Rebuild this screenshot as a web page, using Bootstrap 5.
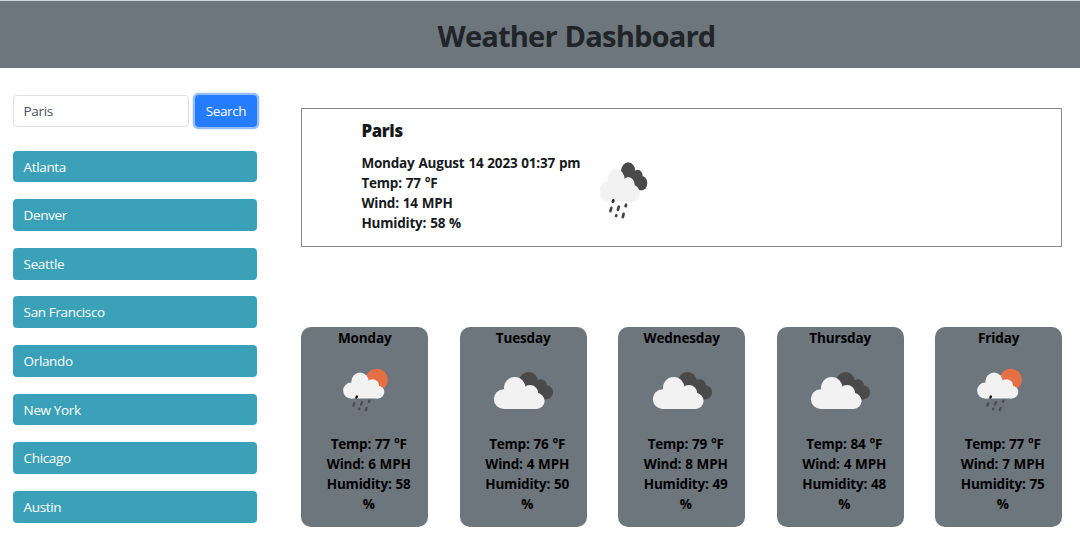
<!DOCTYPE html>
<html lang="en">
<head>
<meta charset="utf-8">
<meta name="viewport" content="width=device-width, initial-scale=1">
<title>Weather Dashboard</title>
<link href="https://cdn.jsdelivr.net/npm/bootstrap@5.3.0/dist/css/bootstrap.min.css" rel="stylesheet">
<style>
  html { font-size: 13.5px; }
  body { font-family: "Open Sans", "Noto Sans", sans-serif; font-size: 13.5px; line-height: 20.3px; overflow: hidden; }
  .page-header { height: 68px; background: #6d757d; border-top: 1px solid #cdd9e0; padding: 4px 0 0 73px; }
  .page-header h1 { font-size: 29.2px; font-weight: 700; color: #212529; letter-spacing: -.88px; word-spacing: 1px; }
  .sidebar { width: 244px; margin: 27px 0 0 13px; }
  .sidebar .form-control, .sidebar .btn { height: 31.8px; padding: 0 9.6px; border-radius: 3.5px; font-size: 13.5px; line-height: 31px; letter-spacing: -.36px; }
  .sidebar .form-control { width: 175.5px; border-color: #dee2e6; color: #495057; }
  .sidebar .btn-search { width: 62px; color: #fff; background: #267cff; border-color: #267cff; box-shadow: 0 0 0 2.3px #94befe; }
  .sidebar .btn-city { color: #fff; background: #3aa1b8; border-color: #3aa1b8; }
  .city-list { gap: 16.8px; margin-top: 23.9px; }
  .forecast-area { margin: 40px 18px 0 44.4px; }
  .current { height: 139px; border: 1px solid #8b8b8b; padding: 12px 0 0 59px; font-weight: 700; letter-spacing: -.2px; word-spacing: .6px; color: #16191c; }
  .current h2 { font-size: 16.8px; font-weight: 800; line-height: 20px; margin-bottom: 11.6px; letter-spacing: -.35px; }
  .current-icon { width: 60px; height: 70px; margin: 35px 0 0 14.4px; }
  .days { margin-top: 80px; gap: 31.9px; }
  .day { flex: 1 1 0; height: 200.4px; border-radius: 10px; background: #6d757d; color: #000; font-weight: 700; letter-spacing: -.2px; word-spacing: .6px; text-align: center; }
  .day h3 { font-size: 13.5px; line-height: 20.3px; font-weight: 700; margin: 1.3px 0 16.4px; letter-spacing: -.14px; }
  .day-icon { width: 60px; height: 60px; display: block; margin: 0 auto 8.6px; }
  .day ul { padding: 0 13px 0 21px; }
</style>
</head>
<body>
<svg width="0" height="0" class="position-absolute" aria-hidden="true">
  <defs>
    <g id="cloud">
      <circle cx="21.7" cy="22.7" r="10.7"/><circle cx="10.6" cy="34.1" r="9.8"/><circle cx="37" cy="28.4" r="8.3"/><circle cx="43.7" cy="36" r="7.9"/>
      <path d="M10.6 43.9H43.7V31L27 22 10 28Z"/>
    </g>
    <g id="back-cloud">
      <circle cx="35.5" cy="16.4" r="9.3"/><circle cx="47.8" cy="20.3" r="6.1"/><circle cx="53" cy="27.3" r="7"/>
      <path d="M35 16L48 20 54 34.2H43Z"/>
    </g>
    <symbol id="cloudy" viewBox="0 0 60 60">
      <use href="#back-cloud" fill="#4a4a4b"/><use href="#cloud" fill="#f2f2f2"/>
    </symbol>
    <symbol id="sun-rain" viewBox="0 0 60 60">
      <circle cx="41.8" cy="14.7" r="11" fill="#e57045"/>
      <use href="#cloud" fill="#f2f2f2" transform="translate(7.5 -2.1) scale(.81)"/>
      <g stroke-width="2.4" stroke-linecap="round">
        <path stroke="#111" d="M21.4 32.6l.4-1"/>
        <path stroke="#4b4f55" d="M18.5 40.5l.8-2.3M26.1 39.5l.8-2.3M34 36.8l.4-1M24.1 44.2l.2-.5M30.8 45.2l.8-2.3"/>
      </g>
    </symbol>
    <symbol id="rain" viewBox="0 0 60 70">
      <use href="#back-cloud" fill="#4a4a4b" transform="translate(5.5 -1) scale(.78 1.03)"/>
      <use href="#cloud" fill="#f2f2f2" transform="translate(4 .3) scale(.79 1.03)"/>
      <g stroke="#444" stroke-width="2.7" stroke-linecap="round">
        <path stroke="#222" d="M17.9 45.7l.4-1.4"/>
        <path d="M15.4 55.2l.9-3.2M22.9 53.9l.9-3.2M30.6 50.2l.5-1.5M21.1 60l.2-.7M27.8 61.1l.8-3.2"/>
      </g>
    </symbol>
  </defs>
</svg>

<header class="page-header text-center"><h1 class="mb-0 pt-3">Weather Dashboard</h1></header>

<div class="d-flex align-items-start">
  <aside class="sidebar flex-shrink-0">
    <form class="d-flex justify-content-between">
      <input class="form-control" type="text" value="Paris" aria-label="City">
      <button class="btn btn-search" type="button">Search</button>
    </form>
    <div class="city-list d-flex flex-column">
      <button class="btn btn-city text-start">Atlanta</button>
      <button class="btn btn-city text-start">Denver</button>
      <button class="btn btn-city text-start">Seattle</button>
      <button class="btn btn-city text-start">San Francisco</button>
      <button class="btn btn-city text-start">Orlando</button>
      <button class="btn btn-city text-start">New York</button>
      <button class="btn btn-city text-start">Chicago</button>
      <button class="btn btn-city text-start">Austin</button>
    </div>
  </aside>

  <main class="forecast-area flex-grow-1">
    <section class="current d-flex align-items-start">
      <div>
        <h2>Paris</h2>
        <ul class="list-unstyled mb-0">
          <li>Monday August 14 2023 01:37 pm</li>
          <li>Temp: 77 °F</li>
          <li>Wind: 14 MPH</li>
          <li>Humidity: 58 %</li>
        </ul>
      </div>
      <svg class="current-icon"><use href="#rain"/></svg>
    </section>

    <section class="days d-flex">
      <article class="day"><h3>Monday</h3><svg class="day-icon"><use href="#sun-rain"/></svg>
        <ul class="list-unstyled mb-0"><li>Temp: 77 °F</li><li>Wind: 6 MPH</li><li>Humidity: 58 %</li></ul></article>
      <article class="day"><h3>Tuesday</h3><svg class="day-icon"><use href="#cloudy"/></svg>
        <ul class="list-unstyled mb-0"><li>Temp: 76 °F</li><li>Wind: 4 MPH</li><li>Humidity: 50 %</li></ul></article>
      <article class="day"><h3>Wednesday</h3><svg class="day-icon"><use href="#cloudy"/></svg>
        <ul class="list-unstyled mb-0"><li>Temp: 79 °F</li><li>Wind: 8 MPH</li><li>Humidity: 49 %</li></ul></article>
      <article class="day"><h3>Thursday</h3><svg class="day-icon"><use href="#cloudy"/></svg>
        <ul class="list-unstyled mb-0"><li>Temp: 84 °F</li><li>Wind: 4 MPH</li><li>Humidity: 48 %</li></ul></article>
      <article class="day"><h3>Friday</h3><svg class="day-icon"><use href="#sun-rain"/></svg>
        <ul class="list-unstyled mb-0"><li>Temp: 77 °F</li><li>Wind: 7 MPH</li><li>Humidity: 75 %</li></ul></article>
    </section>
  </main>
</div>
<script src="https://cdn.jsdelivr.net/npm/bootstrap@5.3.0/dist/js/bootstrap.bundle.min.js"></script>
</body>
</html>
